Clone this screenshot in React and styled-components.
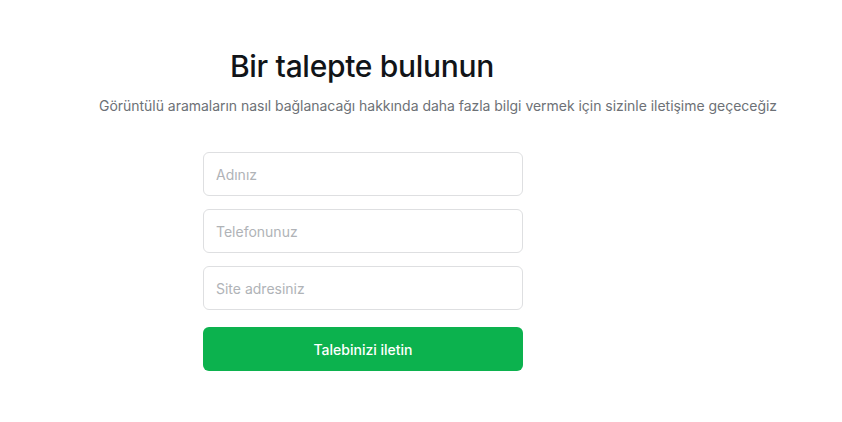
import styled, { createGlobalStyle } from "styled-components";

const GlobalStyle = createGlobalStyle`
  body {
    margin: 0;
    background: #ffffff;
    font-family: Inter, "Noto Sans", sans-serif;
  }
`;

const Page = styled.div`
  padding-top: 48px;
  padding-left: 99px;
`;

const Container = styled.div`
  width: 526px;
  display: flex;
  flex-direction: column;
  align-items: center;
`;

const Title = styled.h1`
  margin: 0;
  font-size: 30px;
  line-height: 36px;
  font-weight: 500;
  color: #111418;
  letter-spacing: -0.3px;
`;

const SubTitle = styled.p`
  margin: 12px 0 0;
  align-self: flex-start;
  white-space: nowrap;
  font-size: 14px;
  line-height: 20px;
  letter-spacing: -0.03px;
  color: #6d7176;
`;

const Form = styled.form`
  margin: 36px 0 0 2px;
  width: 320px;
  display: flex;
  flex-direction: column;
  gap: 13px;
`;

const Input = styled.input`
  box-sizing: border-box;
  width: 100%;
  height: 44px;
  padding: 0 12px;
  border: 1px solid #dedfe1;
  border-radius: 6px;
  font-family: inherit;
  font-size: 14px;
  color: #222;
  outline: none;
  &::placeholder {
    color: #b0b3b7;
  }
`;

const Button = styled.button`
  margin-top: 4px;
  height: 44px;
  border: none;
  border-radius: 6px;
  background: #0cb24e;
  color: #ffffff;
  font-family: inherit;
  font-size: 14px;
  font-weight: 500;
  cursor: pointer;
`;

export default function App() {
  return (
    <Page>
      <GlobalStyle />
      <Container>
        <Title>Bir talepte bulunun</Title>
        <SubTitle>
          Görüntülü aramaların nasıl bağlanacağı hakkında daha fazla bilgi
          vermek için sizinle iletişime geçeceğiz
        </SubTitle>
        <Form onSubmit={(e) => e.preventDefault()}>
          <Input placeholder="Adınız" />
          <Input placeholder="Telefonunuz" />
          <Input placeholder="Site adresiniz" />
          <Button type="submit">Talebinizi iletin</Button>
        </Form>
      </Container>
    </Page>
  );
}
